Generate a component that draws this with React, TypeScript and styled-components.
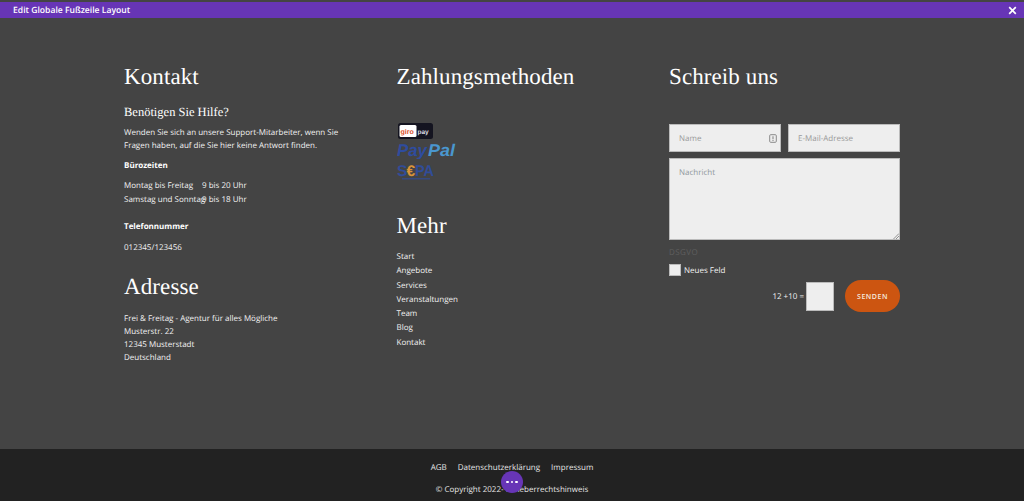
import React from 'react';
import styled, { createGlobalStyle } from 'styled-components';

const GlobalStyle = createGlobalStyle`
    html, body {
        margin: 0;
        padding: 0;
        background: #444444;
    }
    body {
        font-family: "Open Sans", "Liberation Sans", sans-serif;
        text-rendering: geometricPrecision;
        overflow: hidden;
    }
`;

const Page = styled.div`
    position: relative;
    display: flex;
    flex-direction: column;
    width: 1024px;
    height: 501px;
    padding-top: 2px;
    box-sizing: border-box;
    background: #444444;
    overflow: hidden;
`;

const TopBar = styled.div`
    display: flex;
    align-items: center;
    justify-content: space-between;
    height: 16px;
    padding: 0 7px 0 13px;
    background: #6735b6;
    color: #ffffff;
    font-size: 8.6px;
    font-weight: 600;
`;

const CloseIcon = styled.svg`
    width: 9px;
    height: 9px;
`;

const Main = styled.div`
    flex: 1;
    display: grid;
    grid-template-columns: 232px 232px 232px;
    column-gap: 40.5px;
    padding: 0 124px;
    color: #ffffff;
`;

const Column = styled.div`
    display: flex;
    flex-direction: column;
    padding-top: 46px;
`;

const Heading = styled.h2<{ $top?: number }>`
    margin: ${(p) => p.$top ?? 0}px 0 0;
    font-family: "Liberation Serif", serif;
    font-size: 23px;
    font-weight: 400;
    line-height: 26px;
    letter-spacing: 0.1px;
    color: #ffffff;
`;

const SubHeading = styled.h3`
    margin: 14px 0 0;
    font-family: "Liberation Serif", serif;
    font-size: 12.5px;
    font-weight: 400;
    line-height: 16px;
`;

const Text = styled.p<{ $top?: number }>`
    margin: ${(p) => p.$top ?? 0}px 0 0;
    font-size: 8px;
    line-height: 13px;
    color: #f2f2f2;
`;

const Strong = styled.div<{ $top: number }>`
    margin-top: ${(p) => p.$top}px;
    font-size: 8px;
    font-weight: 700;
    line-height: 13px;
`;

const Hours = styled.div`
    display: grid;
    grid-template-columns: 78px auto;
    justify-content: start;
    margin-top: 7px;
    font-size: 8px;
    line-height: 14px;
    color: #f2f2f2;
    white-space: nowrap;
`;

const LogoStack = styled.div`
    display: flex;
    flex-direction: column;
    align-items: flex-start;
    margin-top: 33px;
`;

const Giropay = styled.svg`
    display: block;
    margin-left: 1px;
    width: 35px;
    height: 16px;
`;

const Paypal = styled.svg`
    display: block;
    margin-top: 3px;
    width: 60px;
    height: 17px;
`;

const Sepa = styled.svg`
    display: block;
    margin-top: 4px;
    width: 40px;
    height: 19px;
`;

const LinkList = styled.ul`
    list-style: none;
    margin: 11px 0 0;
    padding: 0;
    font-size: 8px;
    line-height: 14.3px;
    color: #f2f2f2;
`;

const Form = styled.form`
    display: flex;
    flex-direction: column;
    margin-top: 34px;
    width: 231px;
`;

const FieldRow = styled.div`
    display: flex;
    justify-content: space-between;
`;

const Field = styled.div`
    position: relative;
    display: flex;
    align-items: center;
    width: 112px;
    height: 28px;
    padding-left: 9px;
    box-sizing: border-box;
    background: #eeeeee;
    border: 1px solid #bbbbbb;
    font-size: 8px;
    color: #999999;
`;

const FieldBadge = styled.svg`
    position: absolute;
    right: 3px;
    top: 9px;
    width: 8px;
    height: 9px;
`;

const MessageBox = styled.div`
    position: relative;
    height: 82px;
    margin-top: 6px;
    padding: 8px 9px;
    box-sizing: border-box;
    background: #eeeeee;
    border: 1px solid #bbbbbb;
    font-size: 8px;
    line-height: 12px;
    color: #8f979c;
`;

const ResizeGrip = styled.svg`
    position: absolute;
    right: 0;
    bottom: 0;
    width: 6px;
    height: 6px;
`;

const Consent = styled.div`
    margin-top: 7px;
    font-size: 8px;
    line-height: 12px;
    letter-spacing: 0.4px;
    color: #5f5f5f;
`;

const CheckRow = styled.label`
    display: flex;
    align-items: center;
    gap: 3px;
    margin-top: 5px;
    font-size: 8px;
    color: #f2f2f2;
`;

const CheckBox = styled.span`
    display: block;
    width: 10px;
    height: 10px;
    background: #eeeeee;
    border: 0.5px solid #bbbbbb;
`;

const SubmitRow = styled.div`
    display: flex;
    align-items: center;
    justify-content: flex-end;
    margin-top: 4px;
`;

const Captcha = styled.span`
    margin-right: 2px;
    font-size: 8px;
    color: #f2f2f2;
`;

const CaptchaInput = styled.div`
    width: 28px;
    height: 29px;
    box-sizing: border-box;
    background: #eeeeee;
    border: 1px solid #bbbbbb;
`;

const SendButton = styled.button`
    width: 55px;
    height: 32px;
    margin-left: 11px;
    padding: 0;
    border: 0;
    border-radius: 16px;
    background: #cc5511;
    color: #f5e9df;
    font-family: inherit;
    font-size: 7px;
    font-weight: 600;
    letter-spacing: 0.5px;
`;

const Footer = styled.footer`
    display: flex;
    flex-direction: column;
    align-items: center;
    height: 52px;
    background: #222222;
    color: #e6e6e6;
    font-size: 8px;
`;

const FooterLinks = styled.nav`
    display: flex;
    gap: 11px;
    margin-top: 12px;
    line-height: 13px;
`;

const Copyright = styled.div`
    margin-top: 9px;
    line-height: 13px;
`;

const DotsButton = styled.div`
    position: absolute;
    left: 501px;
    top: 471px;
    display: flex;
    align-items: center;
    justify-content: center;
    gap: 2px;
    width: 22px;
    height: 22px;
    border-radius: 50%;
    background: #6735b6;
`;

const Dot = styled.span`
    width: 2.5px;
    height: 2.5px;
    border-radius: 50%;
    background: #ffffff;
`;

const links = ['Start', 'Angebote', 'Services', 'Veranstaltungen', 'Team', 'Blog', 'Kontakt'];

const App: React.FC = () => {
    return (
        <Page>
            <GlobalStyle />
            <TopBar>
                Edit Globale Fußzeile Layout
                <CloseIcon viewBox="0 0 9 9">
                    <path d="M1.2 1.2 L7.8 7.8 M7.8 1.2 L1.2 7.8" stroke="#fff" strokeWidth="1.7" />
                </CloseIcon>
            </TopBar>
            <Main>
                <Column>
                    <Heading>Kontakt</Heading>
                    <SubHeading>Benötigen Sie Hilfe?</SubHeading>
                    <Text $top={6}>
                        Wenden Sie sich an unsere Support-Mitarbeiter, wenn Sie Fragen haben, auf die Sie hier keine Antwort finden.
                    </Text>
                    <Strong $top={7}>Bürozeiten</Strong>
                    <Hours>
                        <span>Montag bis Freitag</span>
                        <span>9 bis 20 Uhr</span>
                        <span>Samstag und Sonntag</span>
                        <span>9 bis 18 Uhr</span>
                    </Hours>
                    <Strong $top={13}>Telefonnummer</Strong>
                    <Text $top={8}>012345/123456</Text>
                    <Heading $top={20}>Adresse</Heading>
                    <Text $top={12}>
                        Frei &amp; Freitag - Agentur für alles Mögliche
                    </Text>
                    <Text>Musterstr. 22</Text>
                    <Text>12345 Musterstadt</Text>
                    <Text>Deutschland</Text>
                </Column>
                <Column>
                    <Heading>Zahlungsmethoden</Heading>
                    <LogoStack>
                        <Giropay viewBox="0 0 35 16">
                            <rect width="35" height="16" rx="2.5" fill="#141420" />
                            <rect x="1.5" y="2" width="17" height="12" rx="1.5" fill="#ffffff" />
                            <text x="2.5" y="10.5" fontFamily="Liberation Sans" fontSize="7" fontWeight="700" fill="#d8502a">giro</text>
                            <text x="19.5" y="10.5" fontFamily="Liberation Sans" fontSize="6.5" fontWeight="700" fill="#dddde5">pay</text>
                        </Giropay>
                        <Paypal viewBox="0 0 60 17">
                            <text x="0" y="14" fontFamily="Liberation Sans" fontSize="17" fontWeight="700" fontStyle="italic" fill="#2f4c9e" textLength="30" lengthAdjust="spacingAndGlyphs">Pay</text>
                            <text x="31" y="14" fontFamily="Liberation Sans" fontSize="17" fontWeight="700" fontStyle="italic" fill="#4a97cf" textLength="27" lengthAdjust="spacingAndGlyphs">Pal</text>
                        </Paypal>
                        <Sepa viewBox="0 0 40 19">
                            <text x="0" y="13" fontFamily="Liberation Sans" fontSize="15.5" fontWeight="700" fill="#314c98">S</text>
                            <text x="9.5" y="13" fontFamily="Liberation Sans" fontSize="15.5" fontWeight="700" fill="#d9943a">€</text>
                            <text x="18" y="13" fontFamily="Liberation Sans" fontSize="15.5" fontWeight="700" fill="#314c98" textLength="19" lengthAdjust="spacingAndGlyphs">PA</text>
                            <rect x="5" y="15" width="28" height="1.5" fill="#314c98" opacity="0.7" />
                        </Sepa>
                    </LogoStack>
                    <Heading $top={31}>Mehr</Heading>
                    <LinkList>
                        {links.map((link) => (
                            <li key={link}>{link}</li>
                        ))}
                    </LinkList>
                </Column>
                <Column>
                    <Heading>Schreib uns</Heading>
                    <Form>
                        <FieldRow>
                            <Field>
                                Name
                                <FieldBadge viewBox="0 0 8 9">
                                    <rect x="0.7" y="0.7" width="6.6" height="7.6" rx="1" fill="none" stroke="#8a8a8a" strokeWidth="1" />
                                    <path d="M4 2.2 V5.2 M4 6 V7" stroke="#8a8a8a" strokeWidth="1.1" />
                                </FieldBadge>
                            </Field>
                            <Field>E-Mail-Adresse</Field>
                        </FieldRow>
                        <MessageBox>
                            Nachricht
                            <ResizeGrip viewBox="0 0 6 6">
                                <path d="M0.5 6 L6 0.5 M3 6 L6 3" stroke="#777" strokeWidth="0.8" />
                            </ResizeGrip>
                        </MessageBox>
                        <Consent>DSGVO</Consent>
                        <CheckRow>
                            <CheckBox />
                            Neues Feld
                        </CheckRow>
                        <SubmitRow>
                            <Captcha>12 +10 =</Captcha>
                            <CaptchaInput />
                            <SendButton type="button">SENDEN</SendButton>
                        </SubmitRow>
                    </Form>
                </Column>
            </Main>
            <Footer>
                <FooterLinks>
                    <span>AGB</span>
                    <span>Datenschutzerklärung</span>
                    <span>Impressum</span>
                </FooterLinks>
                <Copyright>© Copyright 2022- Urheberrechtshinweis</Copyright>
            </Footer>
            <DotsButton>
                <Dot />
                <Dot />
                <Dot />
            </DotsButton>
        </Page>
    );
};

export default App;
